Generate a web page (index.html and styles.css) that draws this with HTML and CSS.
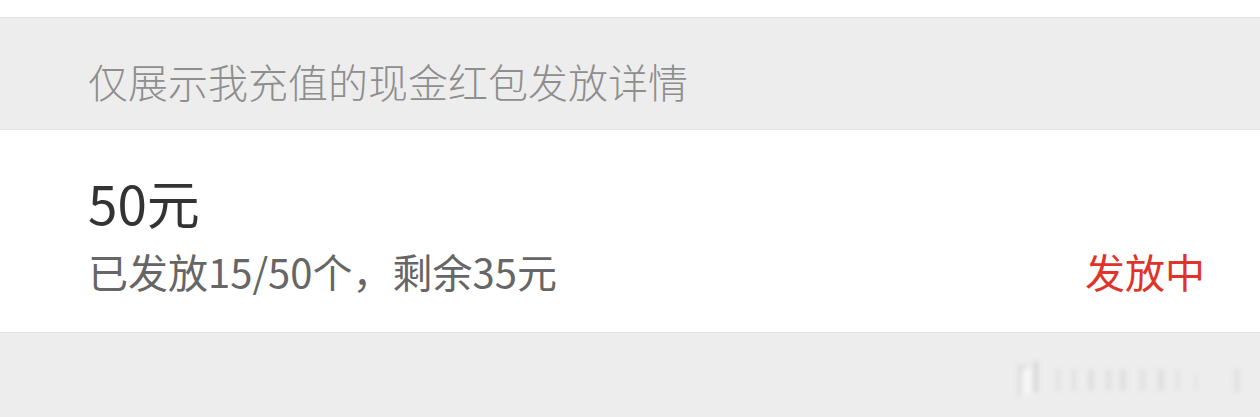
FILE: index.html
```html
<!DOCTYPE html>
<html lang="zh-CN">
<head>
    <meta charset="UTF-8">
    <meta name="viewport" content="width=device-width, initial-scale=1.0">
    <title>现金红包发放详情</title>
    <link rel="stylesheet" href="styles.css">
</head>
<body>

    <div class="topbar"></div>

    <div class="notice">仅展示我充值的现金红包发放详情</div>

    <div class="item">
        <div class="info">
            <div class="amount">50元</div>
            <div class="detail">已发放15/50个，剩余35元</div>
        </div>
        <div class="status">发放中</div>
    </div>

    <div class="footer">
        <!-- 水印 -->
        <svg class="mark" width="250" height="50" viewBox="0 0 250 50">
            <defs>
                <filter id="soft" x="-20%" y="-30%" width="140%" height="160%">
                    <feGaussianBlur stdDeviation="2.4"/>
                </filter>
            </defs>
            <g filter="url(#soft)">
                <rect x="10" y="12" width="8" height="30" fill="#dadada"/>
                <rect x="14" y="16" width="9" height="26" fill="#f6f6f6"/>
                <rect x="26" y="8" width="4" height="32" fill="#d4d4d4"/>
                <rect x="48" y="16" width="5" height="22" fill="#e2e2e2"/>
                <rect x="64" y="16" width="4" height="22" fill="#e0e0e0"/>
                <rect x="80" y="16" width="6" height="22" fill="#dedede"/>
                <rect x="98" y="16" width="5" height="22" fill="#e0e0e0"/>
                <rect x="112" y="16" width="6" height="22" fill="#dedede"/>
                <rect x="132" y="16" width="5" height="22" fill="#e0e0e0"/>
                <rect x="150" y="16" width="6" height="22" fill="#dedede"/>
                <rect x="168" y="16" width="4" height="22" fill="#e3e3e3"/>
                <rect x="186" y="20" width="4" height="18" fill="#e5e5e5"/>
                <rect x="226" y="16" width="6" height="24" fill="#e2e2e2"/>
            </g>
        </svg>
    </div>

</body>
</html>
```

FILE: styles.css
```css
body {
    margin: 0;
    padding: 0;
    background-color: #ededed;
    font-family: "Noto Sans CJK SC", "Noto Sans", sans-serif;
    width: 1260px;
    height: 417px;
    overflow: hidden;
}

.topbar {
    height: 17px;
    background-color: #fff;
    border-bottom: 1px solid #e2e2e2;
}

.notice {
    height: 112px;
    box-sizing: border-box;
    padding: 38px 0 0 88px;
    font-size: 40px;
    font-weight: 300;
    line-height: 50px;
    color: #8e8e8e;
    border-bottom: 1px solid #e2e2e2;
}

.item {
    height: 202px;
    background-color: #fff;
    display: flex;
    align-items: flex-end;
    justify-content: space-between;
    padding: 0 55px 0 88px;
    border-bottom: 1px solid #e2e2e2;
}

.info {
    padding-bottom: 36px;
}

.amount {
    font-size: 53px;
    color: #333;
    line-height: 56px;
}

.detail {
    font-size: 40px;
    color: #666;
    line-height: 50px;
    margin-top: 16px;
}

.status {
    font-size: 40px;
    color: #e0342a;
    line-height: 50px;
    padding-bottom: 36px;
}

.footer {
    position: relative;
    height: 84px;
}

.mark {
    position: absolute;
    right: 2px;
    top: 20px;
}
```
